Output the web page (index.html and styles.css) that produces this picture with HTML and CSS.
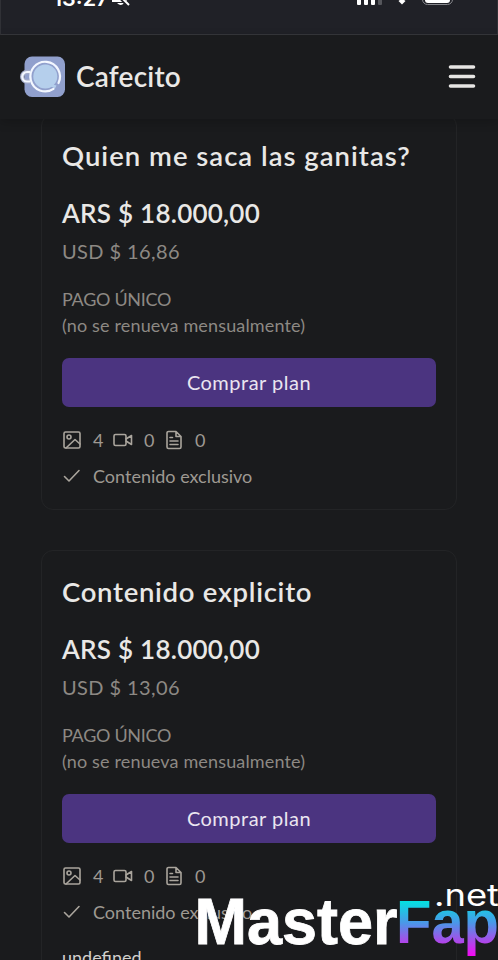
FILE: index.html
```html
<!DOCTYPE html>
<html lang="es">
<head>
<meta charset="utf-8">
<title>Cafecito</title>
<link rel="stylesheet" href="styles.css">
</head>
<body>
<svg class="sprite" aria-hidden="true">
  <symbol id="image" viewBox="0 0 20 20"><rect x="2" y="2" width="16" height="16" rx="1.5"/><circle cx="7" cy="7" r="2"/><path d="M4 18 13 9.5 18 14"/></symbol>
  <symbol id="video" viewBox="0 0 20 20"><rect x="1" y="4.500" width="12" height="11" rx="1.500"/><path d="m13 9 5.500-3.500v9L13 11"/></symbol>
  <symbol id="file" viewBox="0 0 20 20"><path d="M12 1.500H4.500A1.500 1.500 0 0 0 3 3v14a1.500 1.500 0 0 0 1.500 1.500h11A1.500 1.500 0 0 0 17 17V6.500zM12 1.500v5h5M6 7.500h2.500M6 11h8M6 14.500h8"/></symbol>
  <symbol id="check" viewBox="0 0 20 20"><path d="m2.500 10.500 4.500 4.500L17 4.500"/></symbol>
</svg>
<div class="screen">
  <div class="status">
    <span class="time">13:27</span>
    <svg class="bell" width="20" height="8" viewBox="0 0 20 8"><path d="M1 0h15v2H1zM6 3h7q-3 4-7 0z" fill="#fff"/><path d="m10-2 8 8" stroke="#202127" stroke-width="4"/><path d="m10-3 8 8" stroke="#fff" stroke-width="2"/></svg>
    <svg class="signals" width="98" height="8" viewBox="0 0 98 8"><g fill="#fff"><rect y="-5" width="4" height="10" rx="1"/><rect x="7" y="-5" width="4" height="10" rx="1"/><rect x="14" y="-5" width="4" height="10" rx="1"/><path d="M41.500 1 45-1.500 48.500 1 45 4.500z"/><rect x="68" y="-10" width="25" height="13" rx="3"/></g><rect x="21" y="-5" width="4" height="10" rx="1" fill="#55565b"/><rect x="65.500" y="-12" width="30" height="16.500" rx="5" fill="none" stroke="#85868b"/></svg>
  </div>
  <header class="header">
    <svg class="logo" width="46" height="42" viewBox="0 0 46 42"><rect x="4.500" y="0.500" width="40.500" height="40.500" rx="7.500" fill="#91a0cd"/><path d="M10 16H7a4.700 4.700 0 0 0 0 9.500h3" fill="none" stroke="#a3abc9" stroke-width="4.500"/><path d="M10 16H7a4.700 4.700 0 0 0 0 9.500h3" fill="none" stroke="#f3f7ff" stroke-width="2.200"/><circle cx="25.300" cy="20.500" r="12" fill="#b5cfec"/><path d="m31 28 5.500 1.500-1.500 3-4-2z" fill="#b5cfec"/><path d="M38.500 27A14.800 14.800 0 1 0 33.500 32.800" fill="none" stroke="#f3f7ff" stroke-width="2.200" stroke-linecap="round"/></svg>
    <span class="brand">Cafecito</span>
    <svg class="menu" width="28" height="26" viewBox="0 0 28 26"><path d="M2.500 4h23M2.500 13.500h23M2.500 23h23" stroke="#e6e5e3" stroke-width="3.600" stroke-linecap="round"/></svg>
  </header>
  <main class="plans">
    <section class="card">
      <h2><span class="t1">Quien me saca las ganitas?</span></h2>
      <p class="ars">ARS $ 18.000,00</p>
      <p class="usd">USD $ 16,86</p>
      <p class="note"><span class="once">PAGO ÚNICO</span><br>(no se renueva mensualmente)</p>
      <button class="buy">Comprar plan</button>
      <div class="counts"><svg><use href="#image"/></svg><span>4</span><svg><use href="#video"/></svg><span>0</span><svg><use href="#file"/></svg><span>0</span></div>
      <div class="perk"><svg><use href="#check"/></svg><span>Contenido exclusivo</span></div>
    </section>
    <section class="card">
      <h2><span class="t2">Contenido explicito</span></h2>
      <p class="ars">ARS $ 18.000,00</p>
      <p class="usd">USD $ 13,06</p>
      <p class="note"><span class="once">PAGO ÚNICO</span><br>(no se renueva mensualmente)</p>
      <button class="buy">Comprar plan</button>
      <div class="counts"><svg><use href="#image"/></svg><span>4</span><svg><use href="#video"/></svg><span>0</span><svg><use href="#file"/></svg><span>0</span></div>
      <div class="perk"><svg><use href="#check"/></svg><span>Contenido exclusivo</span></div>
      <p class="desc">undefined</p>
    </section>
  </main>
  <svg class="watermark" width="308" height="80" viewBox="0 0 308 80">
    <defs><linearGradient id="fade" gradientUnits="userSpaceOnUse" x1="0" y1="20" x2="0" y2="78"><stop offset="0" stop-color="#00e5df"/><stop offset=".4" stop-color="#4c96e8"/><stop offset=".72" stop-color="#ad48e9"/><stop offset="1" stop-color="#ff00f5"/></linearGradient></defs>
    <text class="wm-main" x="4.500" y="64" textLength="203" lengthAdjust="spacingAndGlyphs">Master</text>
    <text class="wm-fap" x="206" y="63" textLength="103" lengthAdjust="spacingAndGlyphs">Fap</text>
    <text class="wm-net" x="244" y="25.500" textLength="65" lengthAdjust="spacingAndGlyphs">.net</text>
  </svg>
</div>
</body>
</html>
```
FILE: styles.css
```css
* { box-sizing: border-box; }
body { margin: 0; background: #1a1b1d; color: #e9e8e6; font-family: Lato, "Noto Sans", sans-serif; }
h2, p { margin: 0; white-space: nowrap; }
.sprite { display: none; }
.screen { position: relative; width: 498px; height: 960px; overflow: hidden; display: flex; flex-direction: column; }
.status { flex: none; height: 35px; padding: 0 39px 0 52px; overflow: hidden; display: flex; align-items: flex-start; background: #202127; border-bottom: 1px solid #36373b; border-left: 1px solid #303136; border-right: 1px solid #303136; color: #fff; }
.time { width: 58px; margin-top: -15px; font: 600 21.5px/26px Inter, sans-serif; }
.signals { margin-left: auto; margin-right: 3px; }
.header { flex: none; position: relative; z-index: 1; height: 84px; padding: 0 22px 2px 20px; display: flex; align-items: center; background: #1a1b1d; box-shadow: 0 3px 10px rgba(0, 0, 0, .2); }
.logo { position: relative; top: 1px; }
.brand { margin-left: 10px; font-size: 28px; font-weight: 600; letter-spacing: .2px; }
.menu { margin-left: auto; }
.plans { flex: none; margin-top: -5px; padding: 0 41px; display: flex; flex-direction: column; gap: 40px; }
.card { min-height: 396px; padding: 23px 20px 18px; border: 1px solid #232426; border-radius: 12px; }
h2 { font-size: 27.5px; line-height: 36px; font-weight: 600; }
.t1 { letter-spacing: 1px; }
.t2 { letter-spacing: .7px; }
.ars { margin-top: 22px; font-size: 26px; line-height: 34px; font-weight: 600; letter-spacing: .25px; }
.usd { margin-top: 2px; font-size: 20px; line-height: 38px; letter-spacing: .4px; color: #8d8984; }
.note { margin-top: 16px; font-size: 18px; line-height: 26px; letter-spacing: .15px; color: #8d8984; }
.once { letter-spacing: -.3px; }
.buy { display: block; width: 100%; height: 49px; margin-top: 20px; padding: 0; border: 0; border-radius: 7px; background: #4b3480; color: #eae5f0; font: 400 20px/49px Lato, sans-serif; letter-spacing: .5px; }
.counts { display: flex; align-items: center; height: 28px; margin-top: 19px; font-size: 18px; color: #9e9992; }
.counts svg, .perk svg { flex: none; width: 20px; height: 20px; fill: none; stroke: #aaa59d; stroke-width: 1.6; stroke-linecap: round; stroke-linejoin: round; }
.counts span { width: 20px; margin-left: 11px; }
.perk { display: flex; align-items: center; gap: 11px; height: 28px; margin-top: 8px; font-size: 18px; color: #9e9992; }
.desc { margin-top: 17px; font-size: 18px; line-height: 28px; color: #d2d0cd; }
.watermark { position: absolute; left: 190px; top: 880px; z-index: 2; }
.wm-main { font: 700 64px "Liberation Sans", sans-serif; fill: #fff; stroke: #fff; stroke-width: .8px; }
.wm-fap { font: 700 61px "Liberation Sans", sans-serif; fill: url(#fade); }
.wm-net { font: 400 30px Inter, sans-serif; fill: #fff; }
```
